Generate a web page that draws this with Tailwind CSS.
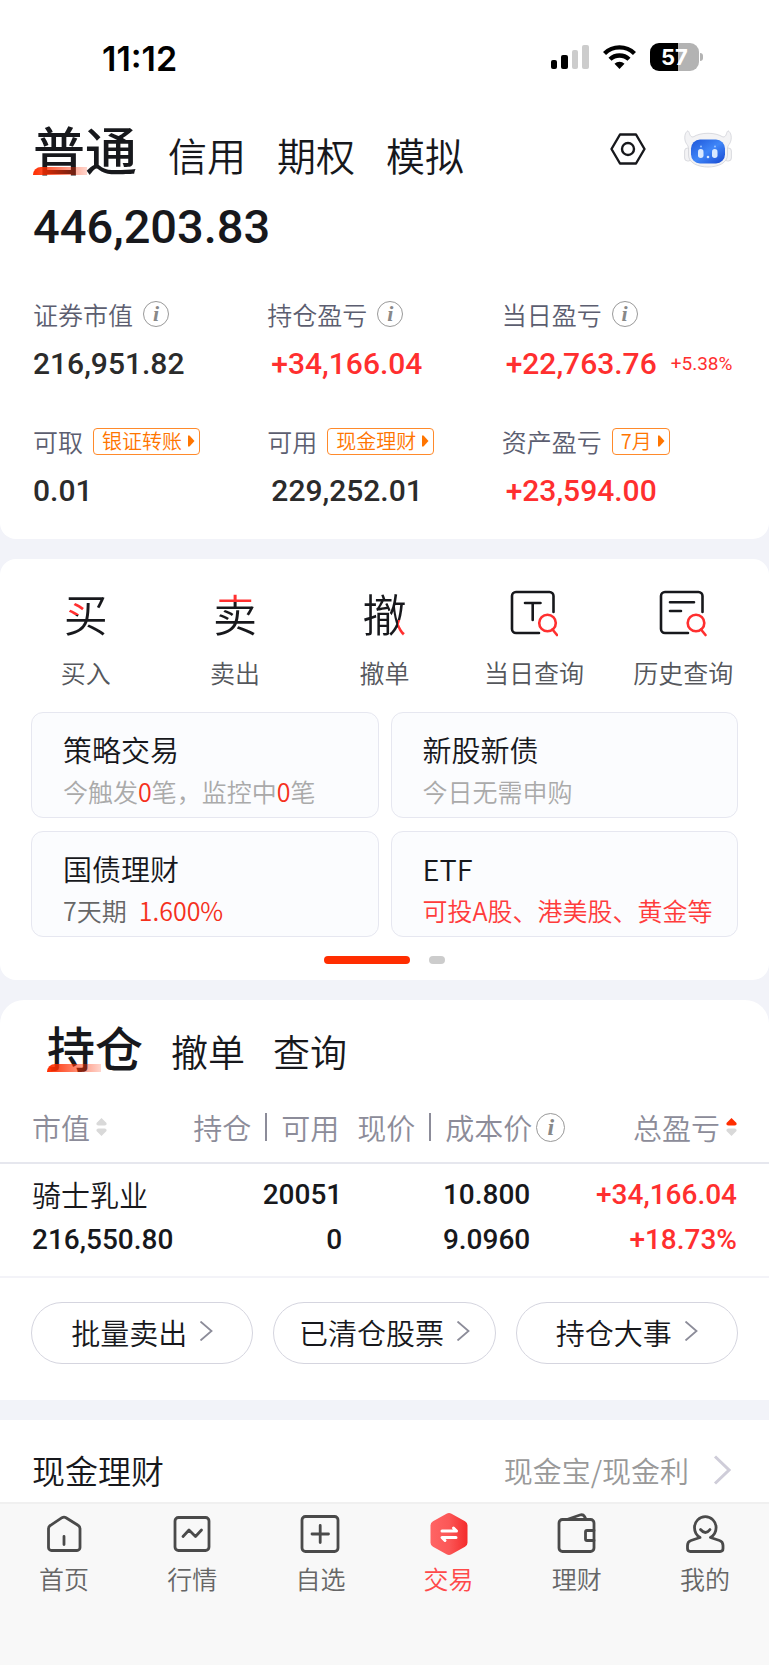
<!DOCTYPE html>
<html lang="zh-CN">

<head>
    <meta charset="UTF-8">
    <meta name="viewport" content="width=device-width, initial-scale=1.0">
    <title>交易</title>
    <script src="https://cdn.jsdelivr.net/npm/@tailwindcss/browser@4"></script>
</head>

<body class="min-h-screen flex flex-col bg-[#f2f3f9] text-[#17181c] font-['Noto_Sans_CJK_SC',sans-serif] font-[350]">

    <!-- account -->
    <header class="bg-white rounded-b-2xl px-[33px] pb-7">
        <div class="flex justify-between items-center h-[114px] pl-[69px] pr-[33px] text-black">
            <span class="pt-0.5 font-['Inter',sans-serif] font-semibold text-[34px]">11:12</span>
            <div class="flex items-center gap-3.5">
                <svg class="w-[38px] h-6" viewBox="0 0 38 24">
                    <rect x="0" y="15" width="6" height="9" rx="2" />
                    <rect x="10" y="10" width="7" height="14" rx="2" />
                    <rect x="21" y="5" width="6" height="19" rx="2" fill="#ccc" />
                    <rect x="31" y="0" width="7" height="24" rx="2" fill="#ccc" />
                </svg>
                <svg class="w-[33px] h-6" viewBox="0 0 33 24" fill="none" stroke="#000" stroke-width="4.4">
                    <path d="M1.5 8.5a21.5 21.5 0 0 1 30 0" />
                    <path d="M7 14.3a13.6 13.6 0 0 1 19 0" />
                    <path d="M16.500 24l-5-5.200a7.200 7.200 0 0 1 10 0z" fill="#000" stroke="none" />
                </svg>
                <div class="flex items-center gap-px">
                    <span
                        class="w-[49px] h-7 rounded-[9px] bg-linear-to-r from-black from-57% to-[#b3b3b3] to-57% text-white text-center font-['Inter',sans-serif] font-bold text-[22px] leading-7">57</span>
                    <span class="w-[3px] h-2 rounded-r-full bg-[#b3b3b3]"></span>
                </div>
            </div>
        </div>

        <div class="flex justify-between items-center pt-[5px]">
            <nav class="flex items-baseline gap-[31px] text-[39px] leading-[60px]">
                <a href="#" class="relative text-[52px] font-medium">普通
                    <span class="absolute left-0 bottom-1 w-[54px] h-2 rounded-tl-lg bg-linear-to-r from-[#ff2d00] to-[#ff2d00]/20"></span>
                </a>
                <a href="#">信用</a>
                <a href="#">期权</a>
                <a href="#">模拟</a>
            </nav>
            <div class="flex items-center gap-[38px] pr-1 pb-1.5">
                <button aria-label="设置">
                    <svg class="w-9 h-8" viewBox="0 0 36 32" fill="none" stroke="#17181c" stroke-width="2.4" stroke-linejoin="round">
                        <path d="M10 1.500h16l8.500 14.500L26 30.500H10L1.500 16z" />
                        <circle cx="18" cy="16" r="6" />
                    </svg>
                </button>
                <button aria-label="智能助手">
                    <svg class="w-12 h-[38px]" viewBox="0 0 48 38">
                        <defs>
                            <linearGradient id="face" x1="0" y1="0" x2="1" y2="1">
                                <stop offset="0" stop-color="#1d55d8" />
                                <stop offset=".5" stop-color="#3f86f8" />
                                <stop offset="1" stop-color="#1747d0" />
                            </linearGradient>
                        </defs>
                        <g fill="#f3f3f5" stroke="#d0d2d8" stroke-width=".8">
                            <rect x=".6" y="18" width="7" height="13" rx="3" />
                            <rect x="40.400" y="18" width="7" height="13" rx="3" />
                            <path d="M2 13C-.5 8 1 2 4 .8c2 1.500 1 6 5 6.200 8-5 22-5 30 0 4-.2 3-4.700 5-6.200 3 1.200 4.500 7.200 2 12.200-1.500 2.500-2.500 3-2.500 6v6c0 16-39 16-39 0v-6c0-3-1-3.500-2.500-6z" />
                        </g>
                        <rect x="7" y="9.500" width="34" height="24" rx="9" fill="url(#face)" />
                        <rect x="14" y="19" width="5.500" height="9" rx="2.700" fill="#d9e9ff" />
                        <rect x="28" y="19" width="5.500" height="9" rx="2.700" fill="#d9e9ff" />
                        <circle cx="17" cy="16.500" r="1" fill="#9cc4ff" />
                        <circle cx="31" cy="16.500" r="1" fill="#9cc4ff" />
                        <circle cx="24" cy="27" r="1.300" fill="#d9e9ff" />
                    </svg>
                </button>
            </div>
        </div>

        <p class="mt-[15px] text-[47px] leading-14 font-medium font-['Roboto',sans-serif]">446,203.83</p>

        <dl class="mt-[41px] grid grid-cols-3 gap-y-[39px] text-[30px] leading-10 text-[#2b2b2b]">
            <div>
                <dt class="flex items-center gap-2.5 text-[25px] leading-9 text-[#5c5e70]">证券市值
                    <button aria-label="说明" class="size-[26px] rounded-full border border-[#999] text-[#888] font-['Liberation_Serif',serif] font-bold italic text-[22px] leading-5">i</button>
                </dt>
                <dd class="mt-3 font-medium font-['Roboto',sans-serif]">216,951.82</dd>
            </div>
            <div>
                <dt class="flex items-center gap-2.5 text-[25px] leading-9 text-[#5c5e70]">持仓盈亏
                    <button aria-label="说明" class="size-[26px] rounded-full border border-[#999] text-[#888] font-['Liberation_Serif',serif] font-bold italic text-[22px] leading-5">i</button>
                </dt>
                <dd class="mt-3 pl-1 font-medium font-['Roboto',sans-serif] text-[#ff2f2f]">+34,166.04</dd>
            </div>
            <div>
                <dt class="flex items-center gap-2.5 text-[25px] leading-9 text-[#5c5e70]">当日盈亏
                    <button aria-label="说明" class="size-[26px] rounded-full border border-[#999] text-[#888] font-['Liberation_Serif',serif] font-bold italic text-[22px] leading-5">i</button>
                </dt>
                <dd class="mt-3 pl-1 flex items-center gap-3.5 font-medium font-['Roboto',sans-serif] text-[#ff2f2f]">+22,763.76
                    <span class="text-[19px] font-normal">+5.38%</span>
                </dd>
            </div>
            <div>
                <dt class="flex items-center gap-2.5 text-[25px] leading-9 text-[#5c5e70]">可取
                    <button class="flex items-center gap-1.5 h-[27px] pl-2 pr-1 rounded border border-[#ff8a2b] text-[#ff7500] text-xl leading-6">银证转账
                        <svg class="w-[7px] h-3" viewBox="0 0 7 12" fill="currentColor"><path d="M0 .5h1.500L6.500 6l-5 5.500H0z" /></svg>
                    </button>
                </dt>
                <dd class="mt-3 font-medium font-['Roboto',sans-serif]">0.01</dd>
            </div>
            <div>
                <dt class="flex items-center gap-2.5 text-[25px] leading-9 text-[#5c5e70]">可用
                    <button class="flex items-center gap-1.5 h-[27px] pl-2 pr-1 rounded border border-[#ff8a2b] text-[#ff7500] text-xl leading-6">现金理财
                        <svg class="w-[7px] h-3" viewBox="0 0 7 12" fill="currentColor"><path d="M0 .5h1.500L6.500 6l-5 5.500H0z" /></svg>
                    </button>
                </dt>
                <dd class="mt-3 pl-1 font-medium font-['Roboto',sans-serif]">229,252.01</dd>
            </div>
            <div>
                <dt class="flex items-center gap-2.5 text-[25px] leading-9 text-[#5c5e70]">资产盈亏
                    <button class="flex items-center gap-1.5 h-[27px] pl-2 pr-1 rounded border border-[#ff8a2b] text-[#ff7500] text-xl leading-6">7月
                        <svg class="w-[7px] h-3" viewBox="0 0 7 12" fill="currentColor"><path d="M0 .5h1.500L6.500 6l-5 5.500H0z" /></svg>
                    </button>
                </dt>
                <dd class="mt-3 pl-1 font-medium font-['Roboto',sans-serif] text-[#ff2f2f]">+23,594.00</dd>
            </div>
        </dl>
    </header>

    <main class="flex-1 flex flex-col gap-5 pt-5">

        <!-- shortcuts -->
        <section class="bg-white rounded-2xl pt-[31px] pb-4">
            <div class="grid grid-cols-5 px-[11px] text-[25px] leading-9 text-[#55575c]">
                <a href="#" class="flex flex-col items-center gap-4">
                    <span class="h-12 text-[44px] leading-[46px] text-transparent bg-clip-text bg-[#17181c] bg-[linear-gradient(#ff2f2f,#ff2f2f)] bg-[length:17px_15px] bg-[position:3px_10px] bg-no-repeat">买</span>
                    买入
                </a>
                <a href="#" class="flex flex-col items-center gap-4">
                    <span class="h-12 text-[44px] leading-[46px] text-transparent bg-clip-text bg-[#17181c] bg-[linear-gradient(#ff2f2f,#ff2f2f)] bg-[length:44px_12px] bg-[position:0px_0px] bg-no-repeat">卖</span>
                    卖出
                </a>
                <a href="#" class="flex flex-col items-center gap-4">
                    <span class="h-12 text-[44px] leading-[46px] text-transparent bg-clip-text bg-[#17181c] bg-[linear-gradient(#ff2f2f,#ff2f2f)] bg-[length:10px_16px] bg-[position:36px_30px] bg-no-repeat">撤</span>
                    撤单
                </a>
                <a href="#" class="flex flex-col items-center gap-4">
                    <svg class="size-12" viewBox="0 0 48 48" fill="none" stroke="#17181c" stroke-width="2.6" stroke-linecap="round" stroke-linejoin="round">
                        <path d="M43.500 22V6a4 4 0 0 0-4-4H6a4 4 0 0 0-4 4v33a4 4 0 0 0 4 4h23M15 13h15.500M22.700 13v17" />
                        <g stroke="#ff2f2f">
                            <circle cx="37.500" cy="33" r="8.300" />
                            <path d="M42.500 39.500l4.500 5.500" />
                        </g>
                    </svg>
                    当日查询
                </a>
                <a href="#" class="flex flex-col items-center gap-4">
                    <svg class="size-12" viewBox="0 0 48 48" fill="none" stroke="#17181c" stroke-width="2.6" stroke-linecap="round" stroke-linejoin="round">
                        <path d="M43.500 22V6a4 4 0 0 0-4-4H6a4 4 0 0 0-4 4v33a4 4 0 0 0 4 4h23M11 12.200h24M11 21h11" />
                        <g stroke="#ff2f2f">
                            <circle cx="37" cy="33" r="8.300" />
                            <path d="M42 39.500l4.500 5.500" />
                        </g>
                    </svg>
                    历史查询
                </a>
            </div>

            <div class="mt-[22px] px-[31px] grid grid-cols-2 gap-x-3 gap-y-[13px] text-[25px] leading-9">
                <a href="#" class="h-[106px] px-[31px] pt-4 rounded-xl border border-[#e6e7f0] bg-[#fbfcfe]">
                    <h3 class="mb-1 text-[29px] leading-10">策略交易</h3>
                    <p class="text-[#aaa]">今触发<span class="text-[#f5301c]">0</span>笔，监控中<span class="text-[#f5301c]">0</span>笔</p>
                </a>
                <a href="#" class="h-[106px] px-[31px] pt-4 rounded-xl border border-[#e6e7f0] bg-[#fbfcfe]">
                    <h3 class="mb-1 text-[29px] leading-10">新股新债</h3>
                    <p class="text-[#aaa]">今日无需申购</p>
                </a>
                <a href="#" class="h-[106px] px-[31px] pt-4 rounded-xl border border-[#e6e7f0] bg-[#fbfcfe]">
                    <h3 class="mb-1 text-[29px] leading-10">国债理财</h3>
                    <p class="flex gap-3 text-[#666]">7天期<span class="text-[#f5301c]">1.600%</span></p>
                </a>
                <a href="#" class="h-[106px] px-[31px] pt-4 rounded-xl border border-[#e6e7f0] bg-[#fbfcfe]">
                    <h3 class="mb-1 text-[29px] leading-10">ETF</h3>
                    <p class="text-[#ff3b3b] whitespace-nowrap">可投A股、港美股、黄金等</p>
                </a>
            </div>

            <div class="mt-[19px] flex justify-center gap-[19px]">
                <span class="w-[86px] h-2 rounded-full bg-[#ff2d00]"></span>
                <span class="w-4 h-2 rounded-full bg-[#ccc]"></span>
            </div>
        </section>

        <!-- positions -->
        <section class="bg-white rounded-t-3xl pt-[18px] pb-9">
            <nav class="flex items-baseline gap-7 px-[47px] text-[37px] leading-14">
                <a href="#" class="relative text-5xl leading-14 font-medium">持仓
                    <span class="absolute left-0 bottom-0.5 w-[54px] h-2 rounded-tl-lg bg-linear-to-r from-[#ff2d00] to-[#ff2d00]/20"></span>
                </a>
                <a href="#">撤单</a>
                <a href="#">查询</a>
            </nav>

            <table class="mt-[13px] w-full table-fixed text-right text-[28px] leading-[45px]">
                <thead class="text-[29px] text-[#8c8c99]">
                    <tr class="h-[71px] border-b-2 border-[#e6e7ee]">
                        <th class="w-1/4 pl-8 font-[350]">
                            <span class="flex items-center gap-1.5">市值
                                <svg class="w-[11px] h-[18px]" viewBox="0 0 11 18" fill="#d9d9d9"><path d="M5.500 0L10.500 5q.5 2.500-2 2.500h-6Q0 7.500.5 5zM5.500 18L10.500 13q.5-2.500-2-2.500h-6Q0 10.500.5 13z" /></svg>
                            </span>
                        </th>
                        <th class="w-[150px] pr-[3px] font-[350]">
                            <span class="flex justify-end items-center gap-3.5">持仓<i class="w-0.5 h-7 bg-[#8c8c99]"></i>可用</span>
                        </th>
                        <th class="w-[223px] font-[350]">
                            <span class="flex justify-end items-center gap-3.5">现价<i class="w-0.5 h-7 bg-[#8c8c99]"></i>
                                <span class="flex items-center gap-1">成本价
                                    <button aria-label="说明" class="size-[29px] rounded-full border border-[#999] text-[#888] font-['Liberation_Serif',serif] font-bold italic text-[24px] leading-6">i</button>
                                </span>
                            </span>
                        </th>
                        <th class="pr-8 font-[350]">
                            <span class="flex justify-end items-center gap-1.5">总盈亏
                                <svg class="w-[11px] h-[18px]" viewBox="0 0 11 18" fill="#d9d9d9"><path fill="#ff2d00" d="M5.500 0L10.500 5q.5 2.500-2 2.500h-6Q0 7.500.5 5z" /><path d="M5.500 18L10.500 13q.5-2.500-2-2.500h-6Q0 10.500.5 13z" /></svg>
                            </span>
                        </th>
                    </tr>
                </thead>
                <tbody class="font-medium font-['Roboto',sans-serif]">
                    <tr class="border-b-2 border-[#f3f3f8]">
                        <td class="pl-8 pt-2 pb-3.5 text-left">
                            <p class="text-[29px] leading-[45px] font-[350] font-['Noto_Sans_CJK_SC',sans-serif]">骑士乳业</p>
                            <p>216,550.80</p>
                        </td>
                        <td class="pt-2 pb-3.5">
                            <p>20051</p>
                            <p>0</p>
                        </td>
                        <td class="pr-[35px] pt-2 pb-3.5">
                            <p>10.800</p>
                            <p>9.0960</p>
                        </td>
                        <td class="pr-8 pt-2 pb-3.5 text-[#ff2f2f]">
                            <p>+34,166.04</p>
                            <p>+18.73%</p>
                        </td>
                    </tr>
                </tbody>
            </table>

            <div class="mt-6 px-[31px] grid grid-cols-3 gap-5 text-[29px]">
                <button class="flex justify-center items-center gap-3 h-[62px] rounded-full border border-[#d5d5df]">批量卖出
                    <svg class="w-3.5 h-5 mb-1" viewBox="0 0 14 20" fill="none" stroke="#8c8c99" stroke-width="1.8"><path d="M1.500 .5L12.500 10l-11 9.500" /></svg>
                </button>
                <button class="flex justify-center items-center gap-3 h-[62px] rounded-full border border-[#d5d5df]">已清仓股票
                    <svg class="w-3.5 h-5 mb-1" viewBox="0 0 14 20" fill="none" stroke="#8c8c99" stroke-width="1.8"><path d="M1.500 .5L12.500 10l-11 9.500" /></svg>
                </button>
                <button class="flex justify-center items-center gap-3 h-[62px] rounded-full border border-[#d5d5df]">持仓大事
                    <svg class="w-3.5 h-5 mb-1" viewBox="0 0 14 20" fill="none" stroke="#8c8c99" stroke-width="1.8"><path d="M1.500 .5L12.500 10l-11 9.500" /></svg>
                </button>
            </div>
        </section>

        <!-- cash -->
        <section class="flex-1 bg-white flex justify-between items-center px-8 pt-7 pb-2.5">
            <h2 class="text-[33px] leading-11">现金理财</h2>
            <a href="#" class="flex items-center gap-6 pr-1.5 text-[29px] leading-11 text-[#999]">现金宝/现金利
                <svg class="w-[18px] h-[30px]" viewBox="0 0 18 30" fill="none" stroke="#cfcdd9" stroke-width="3"><path d="M2 1.500L16 15 2 28.500" /></svg>
            </a>
        </section>
    </main>

    <!-- tab bar -->
    <nav class="grid grid-cols-6 pt-2 pb-[70px] bg-[#f8f8f8] border-t-2 border-[#f0f0f0] text-[25px] leading-[34px] text-[#666]">
        <a href="#" class="flex flex-col items-center gap-[5px]">
            <svg class="size-11" viewBox="0 0 44 44" fill="none" stroke="#4a4a4a" stroke-width="2.8" stroke-linecap="round" stroke-linejoin="round">
                <path d="M6.500 16.500q0-2 2-3.200L20 5.700q2-1.200 4 0l12 7.600q2 1.200 2 3.200V35.500a3 3 0 0 1-3 3H9.500a3 3 0 0 1-3-3zM22 24.500v8" />
            </svg>
            首页
        </a>
        <a href="#" class="flex flex-col items-center gap-[5px]">
            <svg class="size-11" viewBox="0 0 44 44" fill="none" stroke="#4a4a4a" stroke-width="2.8" stroke-linecap="round" stroke-linejoin="round">
                <rect x="5" y="5.500" width="34" height="33" rx="3.500" />
                <path d="M13 24.500l6-6.500 6.500 6.500 6-6.500" />
            </svg>
            行情
        </a>
        <a href="#" class="flex flex-col items-center gap-[5px]">
            <svg class="size-11" viewBox="0 0 44 44" fill="none" stroke="#4a4a4a" stroke-width="2.8" stroke-linecap="round" stroke-linejoin="round">
                <rect x="4" y="4.500" width="36" height="35" rx="3.500" />
                <path d="M14 22h16.500M22.200 13.500V30.500" />
            </svg>
            自选
        </a>
        <a href="#" class="flex flex-col items-center gap-[5px] text-[#ff4a4a]">
            <svg class="size-11" viewBox="0 0 44 44" fill="none">
                <defs>
                    <linearGradient id="hex">
                        <stop offset="0" stop-color="#ff6464" />
                        <stop offset=".5" stop-color="#fb5757" />
                        <stop offset="1" stop-color="#f42b2b" />
                    </linearGradient>
                </defs>
                <path d="M19.500 1.700q2.500-1.400 5 0l13.500 7.600q2.500 1.400 2.500 4v17.400q0 2.600-2.500 4l-13.500 7.600q-2.500 1.400-5 0L6 34.700q-2.500-1.400-2.500-4V13.300q0-2.600 2.500-4z" fill="url(#hex)" />
                <path d="M15 19h14.500l-3-3M29 25.500H15l3 3" stroke="#fff" stroke-width="3" stroke-linecap="round" stroke-linejoin="round" />
            </svg>
            交易
        </a>
        <a href="#" class="flex flex-col items-center gap-[5px]">
            <svg class="size-11" viewBox="0 0 44 44" fill="none" stroke="#4a4a4a" stroke-width="2.800" stroke-linecap="round" stroke-linejoin="round">
                <rect x="4" y="7.500" width="35" height="32" rx="3.500" />
                <path d="M39 18.500h-7a1.500 1.500 0 0 0-1.500 1.500v7a1.500 1.500 0 0 0 1.500 1.500h7M12 7.500L25 3q3-1 4.500 1.500l1.500 3" />
            </svg>
            理财
        </a>
        <a href="#" class="flex flex-col items-center gap-[5px]">
            <svg class="size-11" viewBox="0 0 44 44" fill="none" stroke="#4a4a4a" stroke-width="2.800" stroke-linecap="round" stroke-linejoin="round">
                <path d="M17 25.500C13 23 11.500 20 11.500 15.500a10.800 10.800 0 0 1 21.600 0c0 4.500-1.600 7.500-5.600 10l9 3q3.500 1.200 3.500 5v3q0 3-3 3H7.500q-3 0-3-3v-3q0-3.800 3.500-5z" />
                <path d="M17.500 17.500q5 6 9.500 0" />
            </svg>
            我的
        </a>
    </nav>
</body>

</html>
